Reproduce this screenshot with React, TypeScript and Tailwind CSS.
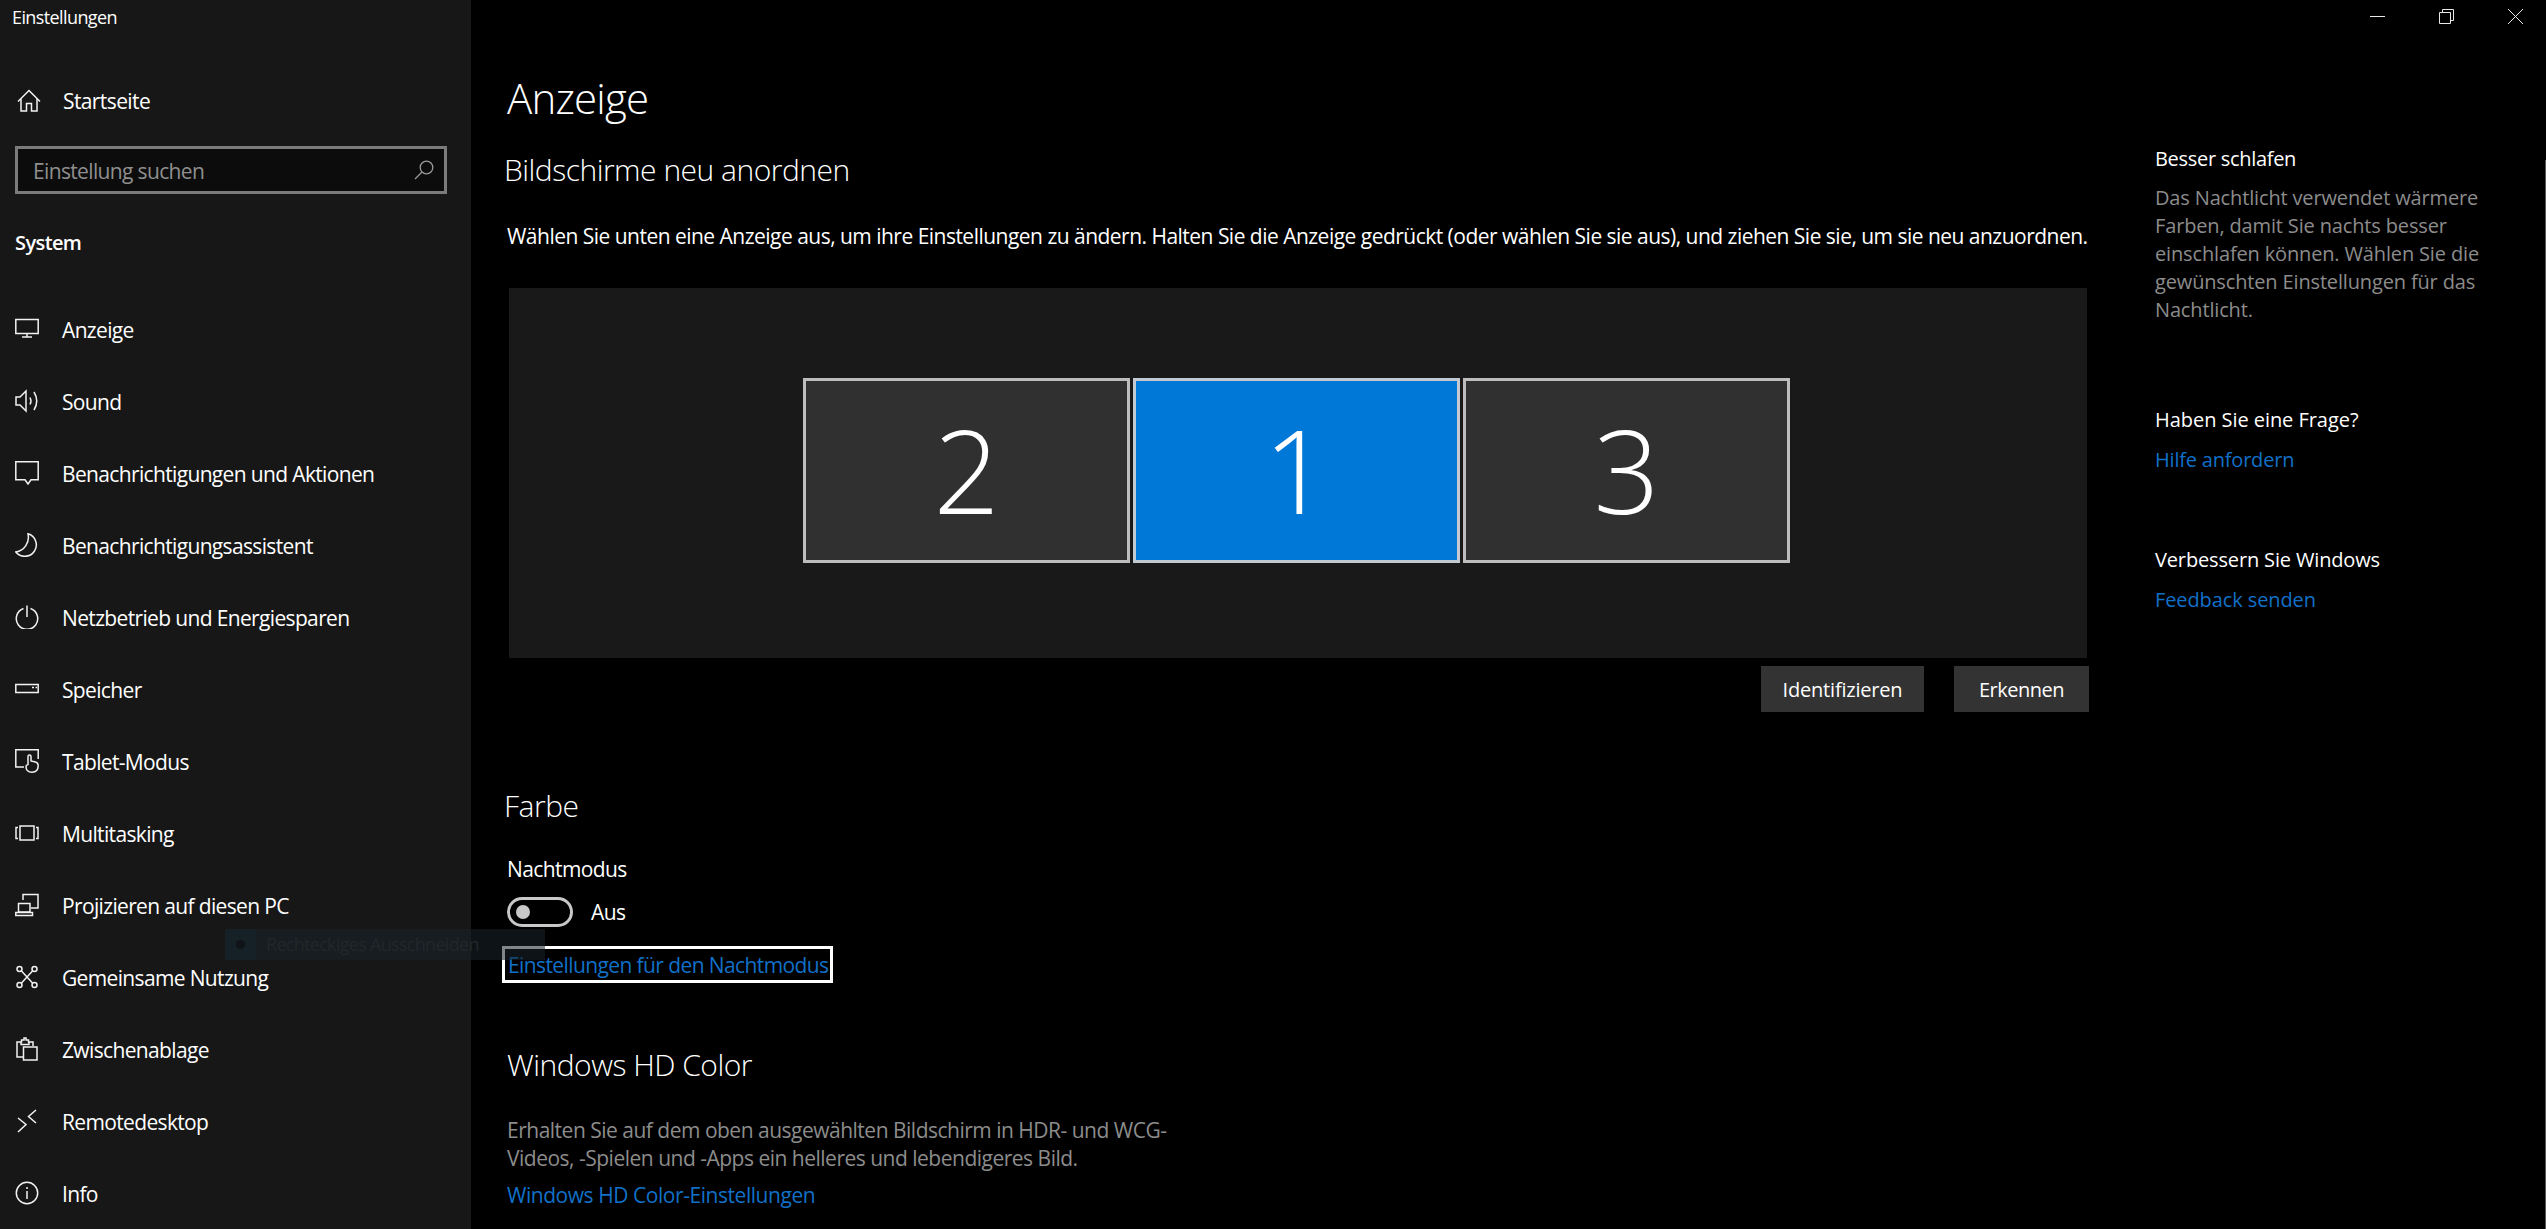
const I = ({ children, className = "" }: { children: React.ReactNode; className?: string }) => (
  <svg viewBox="0 0 24 24" className={"w-6 h-6 shrink-0 " + className} fill="none" stroke="#f2f2f2" strokeWidth="1.5">
    {children}
  </svg>
);

const items: [string, React.ReactNode][] = [
  ["Anzeige", <I className="-mt-[3px]"><path d="M.8 3.5H23.2V17.5H.8Z" /><path d="M12 17.5V21M7 21H17" /></I>],
  ["Sound", <I><path d="M1 8H5L11 2V22L5 16H1Z" /><path d="M15 8.5Q17 12 15 15.5" /><path d="M19 3Q24.5 12 19 21" /></I>],
  ["Benachrichtigungen und Aktionen", <I className="-mt-[1px]"><path d="M.8.8H23.2V18.8H16L13 23 10 18.8H.8Z" /></I>],
  ["Benachrichtigungsassistent", <I><path d="M13 .8A11.5 11.5 0 1 1 .8 19A15 15 0 0 0 13 .8Z" /></I>],
  ["Netzbetrieb und Energiesparen", <I className="-mt-[1px]"><path d="M8.5 3.5A10.7 10.7 0 1 0 15.5 3.5" /><path d="M12 .5V12" /></I>],
  ["Speicher", <I><path d="M.8 7.5H23.2V15.5H.8Z" /><path d="M17 10.5H19M20.5 10.5H22" /></I>],
  ["Tablet-Modus", <I><path d="M9 18H.8V.8H23.2V10" /><path d="M13 15.5V7.5Q13 6 14.5 6T16 7.5V12L20.5 13Q23.2 13.7 23.2 16.5 23.2 23.2 17 23.2 11 23.2 11 17.5 11 16 13 15.5Z" /></I>],
  ["Multitasking", <I className="-mt-[1px]"><path d="M5 5H19V19H5Z" /><path d="M3 6.5H1V17.5H3M21 6.5H23V17.5H21" /></I>],
  ["Projizieren auf diesen PC", <I><path d="M8 7V1.5H23V15H16" /><path d="M3.5 10.5H15V19H3.5Z" /><path d="M.8 19.5H17.5V22.5H.8Z" /></I>],
  ["Gemeinsame Nutzung", <I><circle cx="4.5" cy="4" r="2.5" /><circle cx="19.5" cy="4" r="2.5" /><circle cx="4.5" cy="20" r="2.5" /><circle cx="19.5" cy="20" r="2.5" /><path d="M6.5 6L17.5 18M17.5 6L6.5 18" /></I>],
  ["Zwischenablage", <I><path d="M8.5 20H2V5H6.5V3H9V1H11V3H13.5V5H18V9" /><path d="M6 5V7.5H14V5" /><path d="M8.5 10H22V23H8.5Z" /></I>],
  ["Remotedesktop", <I><path d="M3 9L11 15.5 3 23" /><path d="M21 1L13.5 7.5 21 14" /></I>],
  ["Info", <I><circle cx="12" cy="12" r="10.7" /><path d="M12 10V18M12 6V8" /></I>],
];

export default function App() {
  return (
    <div
      className="relative flex h-[1229px] w-[2546px] overflow-hidden bg-black text-white"
      style={{ fontFamily: '"Open Sans", "Noto Sans", sans-serif' }}
    >
      <aside className="flex w-[471px] shrink-0 flex-col bg-[#171717]">
        <div className="pl-3 text-[18px] leading-[34px] tracking-[-0.6px]">Einstellungen</div>
        <div className="mt-[32px] flex h-[72px] items-center pl-[17px]">
          <I><path d="M1 12.5L12 1.5 23 12.5" /><path d="M4 10V22H9.5V14.5H14.5V22H20V10" /></I>
          <span className="ml-[22px] pt-[2px] text-[21px] tracking-[-0.6px]">Startseite</span>
        </div>
        <div className="ml-[15px] mt-[10px] flex h-[49px] w-[432px] items-center justify-between border-[3px] border-[#7b7b7b] bg-[#0c0c0c] pl-[15px] pr-[10px]">
          <span className="pt-[3px] text-[21px] tracking-[-0.65px] text-[#8f8f8f]">Einstellung suchen</span>
          <svg viewBox="0 0 20 20" className="h-5 w-5" fill="none" stroke="#9a9a9a" strokeWidth="1.3">
            <circle cx="12.5" cy="7.5" r="6.3" /><path d="M8 12L1 19" />
          </svg>
        </div>
        <div className="ml-[15px] mt-[34px] text-[20px] font-semibold leading-[30px] tracking-[-0.6px]">System</div>
        <nav className="mt-[35px] flex flex-col">
          {items.map(([label, icon]) => (
            <div key={label} className="flex h-[72px] shrink-0 items-center pl-[15px]">
              {icon}
              <span className="ml-[23px] whitespace-nowrap pt-[4px] text-[21px] tracking-[-0.65px]">{label}</span>
            </div>
          ))}
        </nav>
      </aside>

      <main className="ml-[36px] flex w-[1582px] shrink-0 flex-col">
        <h1 className="mt-[68px] text-[42px] font-[350] leading-[60px] tracking-[-0.8px]">Anzeige</h1>
        <h2 className="-ml-[3px] mt-[22px] text-[30px] font-[350] leading-[40px] tracking-[-0.5px]">Bildschirme neu anordnen</h2>
        <p className="mt-[31px] whitespace-nowrap text-[21px] leading-[30px] tracking-[-0.52px]">
          Wählen Sie unten eine Anzeige aus, um ihre Einstellungen zu ändern. Halten Sie die Anzeige gedrückt (oder wählen Sie sie aus), und ziehen Sie sie, um sie neu anzuordnen.
        </p>
        <div className="ml-[2px] mt-[37px] flex h-[370px] w-[1578px] items-center gap-[3px] bg-[#191919] pb-[5px] pl-[294px]">
          {[["2", "bg-[#303030] border-[#bdbdbd]"], ["1", "bg-[#0078d7] border-[#c2c9d0]"], ["3", "bg-[#303030] border-[#bdbdbd]"]].map(([n, c]) => (
            <div key={n} className={"flex h-[185px] w-[327px] items-center justify-center border-[3px] pb-[4px] text-[116px] font-light leading-none " + c}>
              {n}
            </div>
          ))}
        </div>
        <div className="mt-[8px] flex justify-end gap-[30px]">
          <div className="flex h-[46px] w-[163px] items-center justify-center bg-[#333333] pt-[2px] text-[20px] tracking-[-0.2px]">Identifizieren</div>
          <div className="flex h-[46px] w-[135px] items-center justify-center bg-[#333333] pt-[2px] text-[20px] tracking-[-0.5px]">Erkennen</div>
        </div>
        <h3 className="-ml-[3px] mt-[74px] text-[30px] font-[350] leading-[40px] tracking-[-0.5px]">Farbe</h3>
        <div className="mt-[28px] text-[21px] leading-[30px] tracking-[-0.6px]">Nachtmodus</div>
        <div className="mt-[13px] flex h-[30px] items-center">
          <div className="flex h-[30px] w-[66px] items-center rounded-full border-[3px] border-[#c8c8c8] pl-[6px]">
            <div className="h-[14px] w-[14px] rounded-full bg-[#c8c8c8]" />
          </div>
          <span className="ml-[18px] pt-[2px] text-[21px] tracking-[-0.6px]">Aus</span>
        </div>
        <div className="-ml-[5px] mt-[19px] flex h-[37px] w-[331px] items-center border-[3px] border-white pl-[3px] pt-[2px]">
          <span className="whitespace-nowrap text-[21px] tracking-[-0.6px] text-[#1170c8]">Einstellungen für den Nachtmodus</span>
        </div>
        <h3 className="mt-[62px] text-[30px] font-[350] leading-[40px] tracking-[-0.5px]">Windows HD Color</h3>
        <p className="mt-[31px] w-[700px] text-[21px] leading-[28px] tracking-[-0.5px] text-[#8c8c8c]">
          Erhalten Sie auf dem oben ausgewählten Bildschirm in HDR- und WCG-<br />Videos, -Spielen und -Apps ein helleres und lebendigeres Bild.
        </p>
        <div className="mt-[9px] text-[21px] leading-[28px] tracking-[-0.45px] text-[#1170c8]">Windows HD Color-Einstellungen</div>
      </main>

      <section className="ml-[67px] flex w-[390px] shrink-0 flex-col">
        <div className="flex h-[32px] items-center justify-end gap-[54px] pr-[23px]">
          <svg viewBox="0 0 15 15" className="h-[15px] w-[15px]" fill="none" stroke="#e8e8e8" strokeWidth="1"><path d="M0 7.5H15" /></svg>
          <svg viewBox="0 0 15 15" className="h-[15px] w-[15px]" fill="none" stroke="#e8e8e8" strokeWidth="1"><path d="M.5 3.5H11.5V14.5H.5Z" /><path d="M3.5 3.5V.5H14.5V11.5H11.5" /></svg>
          <svg viewBox="0 0 15 15" className="h-[15px] w-[15px]" fill="none" stroke="#e8e8e8" strokeWidth="1"><path d="M0 0L15 15M15 0L0 15" /></svg>
        </div>
        <div className="-ml-[1px] mt-[113px] text-[20px] leading-[28px] tracking-[-0.3px]">Besser schlafen</div>
        <p className="-ml-[1px] mt-[11px] w-[340px] text-[20px] leading-[28px] tracking-[-0.15px] text-[#8c8c8c]">
          Das Nachtlicht verwendet wärmere<br />Farben, damit Sie nachts besser<br />einschlafen können. Wählen Sie die<br />gewünschten Einstellungen für das<br />Nachtlicht.
        </p>
        <div className="-ml-[1px] mt-[82px] text-[20px] leading-[28px] tracking-[-0.05px]">Haben Sie eine Frage?</div>
        <div className="-ml-[1px] mt-[12px] text-[20px] leading-[28px] tracking-[-0.2px] text-[#1170c8]">Hilfe anfordern</div>
        <div className="-ml-[1px] mt-[72px] text-[20px] leading-[28px] tracking-[-0.15px]">Verbessern Sie Windows</div>
        <div className="-ml-[1px] mt-[12px] text-[20px] leading-[28px] tracking-[-0.1px] text-[#1170c8]">Feedback senden</div>
      </section>

      <div className="absolute right-0 top-[160px] h-[1069px] w-px bg-[#5a5a5a]" />

      <div className="absolute left-[225px] top-[929px] flex h-[31px] w-[320px] items-center bg-[rgba(24,34,40,0.55)]">
        <div className="flex h-full w-[31px] items-center justify-center bg-[rgba(20,40,55,0.3)]">
          <div className="h-[9px] w-[9px] rounded-full bg-[#0e1418]" />
        </div>
        <span className="ml-[10px] whitespace-nowrap text-[18px] tracking-[-0.7px] text-[#22272b]">Rechteckiges Ausschneiden</span>
      </div>
    </div>
  );
}
